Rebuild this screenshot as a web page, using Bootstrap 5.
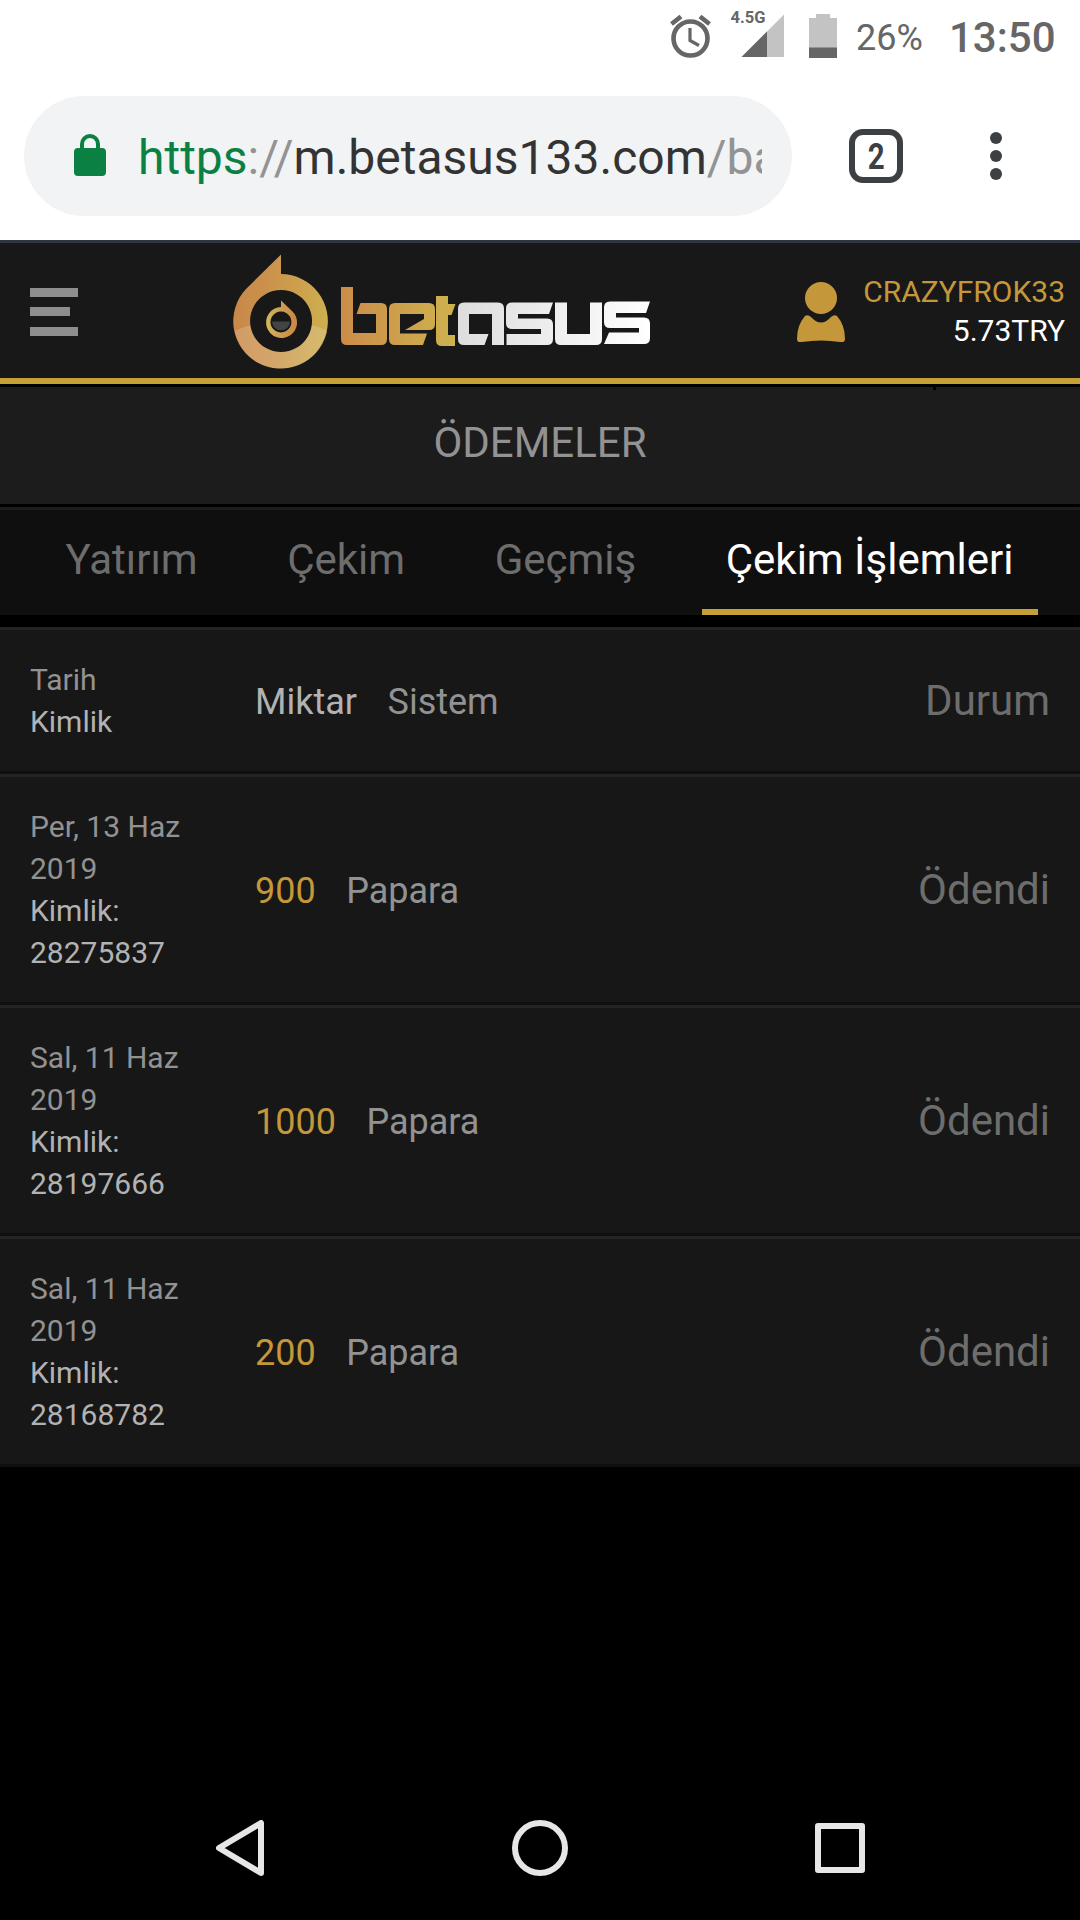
<!DOCTYPE html>
<html lang="tr">
<head>
<meta charset="utf-8">
<meta name="viewport" content="width=device-width, initial-scale=1">
<title>Ödemeler</title>
<link href="https://cdn.jsdelivr.net/npm/bootstrap@5.3.0/dist/css/bootstrap.min.css" rel="stylesheet">
<style>
body{font-family:Roboto,"Noto Sans",sans-serif;background:#000;width:1080px;height:1920px;overflow:hidden}
svg{display:block;flex:none}
.status{height:60px;color:#666;padding-right:26px}
.pct{font-size:36px;line-height:60px;padding-top:8px;margin-left:18px;width:66px}
.clock{font-size:42px;font-weight:500;line-height:60px;padding-top:8px;margin-left:27px;width:105px}
.chrome{height:180px;padding:36px 0 24px 24px}
.omnibox{width:768px;height:120px;background:#f1f3f5;padding:0 30px 0 50px}
.lock{margin-top:-2px}
.url{font-size:48px;line-height:118px;margin-left:32px;color:#939393;white-space:nowrap;width:624px;overflow:hidden;padding-top:3px}
.secure{color:#0b8043}.host{color:#333}
.tabcount{width:54px;height:54px;border:6px solid #3c4043;border-radius:14px;margin-left:57px;font:700 36px/44px Roboto,sans-serif;color:#3c4043}
.tabcount span{transform:scaleX(.82)}
.dots{margin-right:78px}
.site-head{border-top:3px solid #2f3542;border-bottom:6px solid #c4a035;background:#181818;padding:2px 15px 0 30px;height:144px}
.brand{margin-left:154px}
.account{font-size:30px;line-height:39px;color:#c4973b;margin-left:18px;white-space:nowrap;margin-top:-1px}
.page-title{height:123px;border-top:3px solid #000;border-bottom:3px solid #000;background:linear-gradient(#000,#000) 933px 0/3px 3px no-repeat #1c1c1c;color:#929292;font-size:42px;line-height:111px}
.tabs{height:108px;border-top:3px solid #1c1c1c;background:#0f0f0f;font-size:42px;line-height:100px;justify-content:space-evenly}
.tabs .nav-link{color:#6d6d6d;padding:0 24px;height:105px;border-bottom:6px solid transparent;border-radius:0}
.tabs .nav-link.active{color:#fff;border-color:#c4a035;padding-right:25px}
.history{margin-top:12px}
.entry{background:#171717;border-top:3px solid #242424;border-bottom:3px solid #0f0f0f;padding:28.5px 30px}
.entry{color:#929292}
.when{width:225px;padding-right:63px;font-size:30px;line-height:42px}
.ident{color:#b2b2b2}
.amount{font-size:36px;padding-top:2px;gap:30.5px}
.sum{color:#c4973b}
.state{font-size:42px;line-height:54px;color:#6d6d6d}
.sysbar{height:144px;padding:0 215px 0 216px}
</style>
</head>
<body class="d-flex flex-column">
<div class="bg-white">
  <div class="status d-flex justify-content-end">
    <svg width="170" height="60" viewBox="668 0 170 60" fill="none">
      <circle cx="690.5" cy="38.500" r="17" stroke="#666" stroke-width="4.600"/>
      <path d="M671.500 24 681 16.500M709.500 24 700 16.500" stroke="#666" stroke-width="4.600"/>
      <path d="M690 28V40.500L699 45.500" stroke="#666" stroke-width="3.200"/>
      <text x="730.500" y="22.500" font-size="16.500" font-weight="700" fill="#666">4.5G</text>
      <path d="M784 14.500V57H741.500Z" fill="#c3c3c3"/><path d="M767 31.500V57H741.500Z" fill="#666"/>
      <path d="M816 14h14v4h7v40h-28V18h7Z" fill="#c3c3c3"/><path d="M809 47.500h28V58h-28Z" fill="#666"/>
    </svg>
    <div class="pct">26%</div>
    <div class="clock">13:50</div>
  </div>
  <div class="chrome d-flex align-items-center">
    <div class="omnibox rounded-pill d-flex align-items-center">
      <svg class="lock" width="32" height="42" viewBox="0 0 32 42"><rect y="14" width="32" height="28" rx="4" fill="#0b8043"/><path d="M8 16V10a8 8 0 0 1 16 0v6" fill="none" stroke="#0b8043" stroke-width="4"/></svg>
      <div class="url"><span class="secure">https</span>://<span class="host">m.betasus133.com</span>/ba</div>
    </div>
    <div class="tabcount d-flex justify-content-center"><span>2</span></div>
    <svg class="dots ms-auto" width="12" height="48" fill="#3c4043"><circle cx="6" cy="6" r="6"/><circle cx="6" cy="24" r="6"/><circle cx="6" cy="42" r="6"/></svg>
  </div>
</div>
<header class="site-head d-flex align-items-center">
  <svg width="48" height="48" fill="#8e8e8e"><path d="M0 0h48v9H0zM0 19h40v9H0zM0 39h48v9H0z"/></svg>
  <svg class="brand" width="420" height="118" viewBox="232 253 420 118" role="img" aria-label="betasus">
    <defs>
      <linearGradient id="g" gradientUnits="userSpaceOnUse" x1="234" x2="328" y1="0" y2="0"><stop stop-color="#c98849"/><stop offset=".4" stop-color="#cb934c"/><stop offset="1" stop-color="#ceaf4f"/></linearGradient>
      <linearGradient id="b" gradientUnits="userSpaceOnUse" x1="340" x2="455" y1="0" y2="0"><stop stop-color="#cb8c49"/><stop offset="1" stop-color="#ceb24e"/></linearGradient>
      <linearGradient id="w" gradientUnits="userSpaceOnUse" x1="457" x2="650" y1="0" y2="0"><stop stop-color="#ddd"/><stop offset="1" stop-color="#fff"/></linearGradient>
      <linearGradient id="s" gradientUnits="userSpaceOnUse" x1="266" x2="297" y1="0" y2="0"><stop stop-color="#d2b75c"/><stop offset="1" stop-color="#c98545"/></linearGradient>
      <clipPath id="low"><path d="M230 333Q281 308 332 333V372H230Z"/></clipPath>
    </defs>
    <path fill="url(#g)" fill-rule="evenodd" d="M281 254.500V274A47.300 47.300 0 1 1 246 289ZM281 290a31 31 0 1 0 .1 0Z"/>
    <path fill="#fff" fill-opacity=".17" fill-rule="evenodd" clip-path="url(#low)" d="M281 274a47.300 47.300 0 1 0 .1 0ZM281 290a31 31 0 1 0 .1 0Z"/>
    <path d="M272 321.500h18a9 9 0 0 1-18 0Z" fill="#444"/>
    <path fill="url(#s)" fill-rule="evenodd" d="M281 300.500V307A15.500 15.500 0 1 0 292 311ZM281 311.500a10.500 10.500 0 1 1-.1 0Z"/>
    <g fill="url(#b)" fill-rule="evenodd">
      <path d="M341 287h12v46h23v-19h-19.500l4-11H381q6 0 6 6v30q0 6-6 6H347q-6 0-6-6Z"/>
      <path d="M395 303h34q6 0 6 6v15q0 6-6 6H405l19-11v-5H400v19.500h27l-4 11.500H395q-6 0-6-6V309q0-6 6-6Z"/>
      <path d="M436 296h12v8h7.500l-4 11H448v20h7v11h-13q-6 0-6-6Z"/>
    </g>
    <g fill="url(#w)">
      <path d="M464 302.500h34q6 0 6 6V345h-12V314h-23v20h19.500l-4 11H464q-6 0-6-6V308.500q0-6 6-6Z"/>
      <path d="M512 302.500h41l-4 11.500H518v4.500h29q6 0 6 6V339q0 6-6 6H506.500V334H541v-5H512q-6 0-6-6V308.500q0-6 6-6Z"/>
      <path d="M555 302.500h12V334h23V302.500h12V339q0 6-6 6H561q-6 0-6-6Z"/>
      <path d="M610 301.500h40l-4 11.500H616v4.500h28q6 0 6 6V338q0 6-6 6H604l5-11.500h30V328H610q-6 0-6-6V307.500q0-6 6-6Z"/>
    </g>
  </svg>
  <svg class="ms-auto" width="48" height="60" fill="#c4973b"><circle cx="24" cy="16" r="16"/><path d="M8 34q3-2 6 1 10 11 20 0 3-3 6-1 8 9 8 23 0 4-5 3-19-3-38 0-5 1-5-3 0-14 8-23Z"/></svg>
  <div class="account text-end"><div>CRAZYFROK33</div><div class="text-white">5.73TRY</div></div>
</header>
<h1 class="page-title text-center fw-normal m-0">ÖDEMELER</h1>
<nav class="tabs nav flex-nowrap">
  <a class="nav-link">Yatırım</a><a class="nav-link">Çekim</a><a class="nav-link">Geçmiş</a><a class="nav-link active">Çekim İşlemleri</a>
</nav>
<main class="history">
  <div class="entry d-flex align-items-center"><div class="when">Tarih<div class="ident">Kimlik</div></div><div class="amount d-flex"><span class="ident">Miktar</span><span>Sistem</span></div><div class="state ms-auto">Durum</div></div>
  <div class="entry d-flex align-items-center"><div class="when">Per, 13 Haz 2019<div class="ident">Kimlik: 28275837</div></div><div class="amount d-flex"><span class="sum">900</span><span>Papara</span></div><div class="state ms-auto">Ödendi</div></div>
  <div class="entry d-flex align-items-center"><div class="when">Sal, 11 Haz 2019<div class="ident">Kimlik: 28197666</div></div><div class="amount d-flex"><span class="sum">1000</span><span>Papara</span></div><div class="state ms-auto">Ödendi</div></div>
  <div class="entry d-flex align-items-center"><div class="when">Sal, 11 Haz 2019<div class="ident">Kimlik: 28168782</div></div><div class="amount d-flex"><span class="sum">200</span><span>Papara</span></div><div class="state ms-auto">Ödendi</div></div>
</main>
<footer class="sysbar mt-auto d-flex align-items-center justify-content-between">
  <svg width="48" height="56" fill="none" stroke="#e6e6e6" stroke-width="6" stroke-linejoin="round"><path d="M45 3V53L3 28Z"/></svg>
  <svg width="56" height="56" fill="none" stroke="#e6e6e6" stroke-width="6"><circle cx="28" cy="28" r="25"/></svg>
  <svg width="50" height="50" fill="none" stroke="#e6e6e6" stroke-width="6" stroke-linejoin="round"><path d="M3 3H47V47H3Z"/></svg>
</footer>
<script src="https://cdn.jsdelivr.net/npm/bootstrap@5.3.0/dist/js/bootstrap.bundle.min.js"></script>
</body>
</html>
